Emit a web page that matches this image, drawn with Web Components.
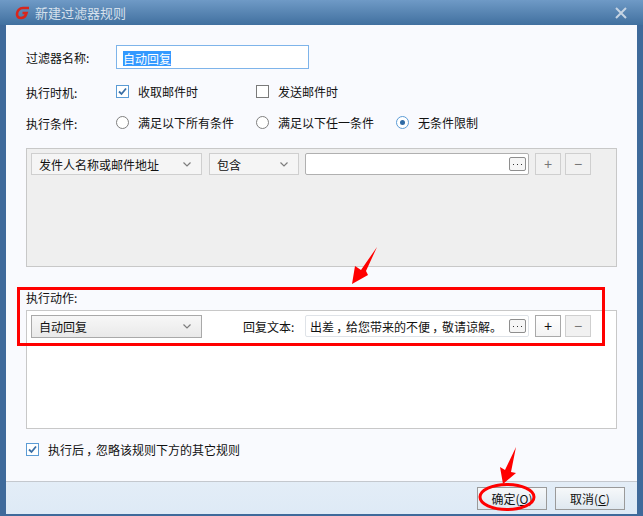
<!DOCTYPE html>
<html lang="zh-CN">
<head>
<meta charset="UTF-8">
<title>新建过滤器规则</title>
<style>
  html, body { margin: 0; padding: 0; background: #3f6a9b; }
  body { font: 12px "Noto Sans CJK SC", "Liberation Sans", sans-serif; color: #111; }
  /* the reference's comma sits in the middle of its cell */
  .cm { display: inline-block; width: 12px; text-align: center; font-feature-settings: "palt"; }
</style>
</head>
<body>

<filter-dialog>
  <span slot="title">新建过滤器规则</span>

  <form-row label="过滤器名称:" style="height:24px;margin-top:20px">
    <name-input value="自动回复"></name-input>
  </form-row>
  <form-row label="执行时机:" low style="height:14px;margin-top:15px">
    <check-option checked style="width:140px">收取邮件时</check-option>
    <check-option>发送邮件时</check-option>
  </form-row>
  <form-row label="执行条件:" low style="height:14px;margin-top:17px">
    <radio-option style="width:140px">满足以下所有条件</radio-option>
    <radio-option style="width:140px">满足以下任一条件</radio-option>
    <radio-option checked>无条件限制</radio-option>
  </form-row>

  <rule-panel style="margin-top:19px;background:#efefef">
    <drop-select style="width:171px">发件人名称或邮件地址</drop-select>
    <drop-select style="width:90px;margin-left:7px">包含</drop-select>
    <text-more style="margin-left:6px"></text-more>
    <square-btn style="margin-left:6px" disabled>+</square-btn>
    <square-btn style="margin-left:4px" disabled>−</square-btn>
  </rule-panel>

  <div style="margin:24px 0 5px 20px;height:14px;line-height:14px">执行动作:</div>

  <rule-panel style="background:#fff">
    <drop-select raised style="width:171px">自动回复</drop-select>
    <span style="width:62px;margin-left:41px;white-space:nowrap">回复文本:</span>
    <text-more light>出差<span class="cm">，</span>给您带来的不便<span class="cm">，</span>敬请谅解。</text-more>
    <square-btn active style="margin-left:6px">+</square-btn>
    <square-btn style="margin-left:4px" disabled>−</square-btn>
  </rule-panel>

  <check-option checked style="margin:13px 0 0 20px;width:400px">执行后<span class="cm">，</span>忽略该规则下方的其它规则</check-option>

  <push-btn slot="footer">确定(<u>O</u>)</push-btn>
  <push-btn slot="footer">取消(<u>C</u>)</push-btn>
</filter-dialog>

<mark-up></mark-up>

<script>
class FilterDialog extends HTMLElement {
  constructor() {
    super();
    this.attachShadow({mode: 'open'}).innerHTML = `
    <style>
      :host { display: flex; flex-direction: column; width: 643px; height: 516px; box-sizing: border-box;
              padding: 0 6px 2px 6px; background: #3f6a9b; overflow: hidden; }
      .bar { display: flex; align-items: center; height: 25px; margin: 0 -6px; padding: 0 6px 0 15px; flex: none;
             background: linear-gradient(#6f9ac6, #41709f); color: #d5e0ec; font-size: 13px; }
      .bar svg.logo { width: 16px; height: 14px; margin-right: 4px; }
      .bar .grow { flex: 1; }
      .bar svg.close { width: 12px; height: 12px; margin-right: 10px; }
      .body { flex: 1; background: #f9fafe; padding: 0 20px 0 0; display: flex; flex-direction: column; }
      .foot { flex: none; height: 32px; border-top: 1px solid #c4c8ce; background: linear-gradient(#e3edf7, #deeaf6);
              display: flex; justify-content: flex-end; align-items: center; gap: 8px; padding: 0 12px 0 0; }
    </style>
    <div class="bar">
      <svg class="logo" viewBox="0 0 16 14"><path fill="none" stroke="#d8261c" stroke-width="2.600" d="M14 2H8C4.500 2 2 5 2 8c0 2.500 1.500 4 4 4 2.500 0 4-1 5-3.500l.5-1.500H7.500"/></svg>
      <slot name="title"></slot>
      <span class="grow"></span>
      <svg class="close" viewBox="0 0 12 12"><path d="M1 1l10 10M11 1L1 11" stroke="#c6d4e3" stroke-width="2" fill="none"/></svg>
    </div>
    <div class="body"><slot></slot></div>
    <div class="foot"><slot name="footer"></slot></div>`;
  }
}

class FormRow extends HTMLElement {
  constructor() {
    super();
    this.attachShadow({mode: 'open'}).innerHTML = `
    <style>
      :host { display: flex; align-items: center; padding-left: 20px; }
      :host([low]) .label { padding-top: 3px; }
      .label { width: 90px; flex: none; white-space: nowrap; }
    </style>
    <span class="label"></span><slot></slot>`;
  }
  connectedCallback() {
    this.shadowRoot.querySelector('.label').textContent = this.getAttribute('label');
  }
}

class NameInput extends HTMLElement {
  constructor() {
    super();
    this.attachShadow({mode: 'open'}).innerHTML = `
    <style>
      :host { display: block; width: 193px; height: 24px; box-sizing: border-box; border: 1px solid #7eb4ea; background: #fff; padding: 4px 6px; }
      span { display: inline-block; height: 15px; line-height: 15px; background: #3399ff; color: #fff; }
    </style>
    <span></span>`;
  }
  connectedCallback() {
    this.shadowRoot.querySelector('span').textContent = this.getAttribute('value');
  }
}

class CheckOption extends HTMLElement {
  constructor() {
    super();
    this.attachShadow({mode: 'open'}).innerHTML = `
    <style>
      :host { display: flex; align-items: center; height: 14px; white-space: nowrap; }
      svg { width: 13px; height: 13px; flex: none; margin-right: 9px; }
    </style>
    <svg viewBox="0 0 13 13"></svg><span><slot></slot></span>`;
  }
  connectedCallback() {
    const on = this.hasAttribute('checked');
    this.shadowRoot.querySelector('svg').innerHTML = on
      ? '<rect x=".5" y=".5" width="12" height="12" fill="#fff" stroke="#5b9bd5"/><path d="M3 6.500l2.500 2.500L10 3.500" fill="none" stroke="#3a6ea5" stroke-width="1.800"/>'
      : '<rect x=".5" y=".5" width="12" height="12" fill="#fff" stroke="#7a7a7a"/>';
  }
}

class RadioOption extends HTMLElement {
  constructor() {
    super();
    this.attachShadow({mode: 'open'}).innerHTML = `
    <style>
      :host { display: flex; align-items: center; height: 14px; white-space: nowrap; }
      svg { width: 13px; height: 13px; flex: none; margin-right: 9px; }
    </style>
    <svg viewBox="0 0 13 13"></svg><slot></slot>`;
  }
  connectedCallback() {
    const on = this.hasAttribute('checked');
    this.shadowRoot.querySelector('svg').innerHTML =
      `<circle cx="6.500" cy="6.500" r="6" fill="#fff" stroke="${on ? '#5b9bd5' : '#7f7f7f'}"/>` +
      (on ? '<circle cx="6.500" cy="6.500" r="2.500" fill="#2f6aa5"/>' : '');
  }
}

class RulePanel extends HTMLElement {
  constructor() {
    super();
    this.attachShadow({mode: 'open'}).innerHTML = `
    <style>
      :host { display: flex; align-items: flex-start; height: 119px; box-sizing: border-box; margin-left: 20px;
              border: 1px solid #c8c8c8; padding: 4px; }
      ::slotted(span) { line-height: 23px; }
    </style>
    <slot></slot>`;
  }
}

class DropSelect extends HTMLElement {
  constructor() {
    super();
    this.attachShadow({mode: 'open'}).innerHTML = `
    <style>
      :host { display: flex; align-items: center; height: 22px; box-sizing: border-box; flex: none;
              border: 1px solid #cfcfcf; background: #f5f5f5; padding: 0 10px 0 7px; white-space: nowrap; }
      :host([raised]) { height: 23px; border-color: #a9a9a9; background: linear-gradient(#f7f7f7, #e9e9e9); }
      .t { flex: 1; }
      svg { width: 8px; height: 5px; }
    </style>
    <span class="t"><slot></slot></span>
    <svg viewBox="0 0 8 5"><path d="M.5.500L4 4 7.500.500" fill="none" stroke="#7d7d7d" stroke-width="1.200"/></svg>`;
  }
}

class TextMore extends HTMLElement {
  constructor() {
    super();
    this.attachShadow({mode: 'open'}).innerHTML = `
    <style>
      :host { display: flex; align-items: center; width: 224px; height: 22px; box-sizing: border-box; flex: none;
              border: 1px solid #b0b0b0; border-radius: 2px; background: #fff; padding: 0 2px 0 4px; }
      :host([light]) { border-color: #dfe3e8; }
      .t { flex: 1; white-space: nowrap; }
      .more { width: 17px; height: 14px; box-sizing: border-box; border: 1px solid #8e8e8e; border-radius: 2px; background: #f6f6f6;
              flex: none; display: flex; align-items: center; justify-content: center; }
      svg { width: 11px; height: 3px; }
    </style>
    <div class="t"><slot></slot></div>
    <div class="more"><svg viewBox="0 0 11 3"><path d="M1 1h1v1H1zM5 1h1v1H5zM9 1h1v1H9z" fill="#333"/></svg></div>`;
  }
}

class SquareBtn extends HTMLElement {
  constructor() {
    super();
    this.attachShadow({mode: 'open'}).innerHTML = `
    <style>
      :host { display: flex; align-items: center; justify-content: center; width: 26px; height: 22px; box-sizing: border-box; flex: none;
              border: 1px solid #cfcfcf; background: #f1f1f1; color: #777; font: 14px "Liberation Sans", sans-serif; }
      :host([active]) { border-color: #a9a9a9; background: linear-gradient(#fff, #f3f3f3); color: #111; }
    </style>
    <slot></slot>`;
  }
}

class PushBtn extends HTMLElement {
  constructor() {
    super();
    this.attachShadow({mode: 'open'}).innerHTML = `
    <style>
      :host { display: flex; align-items: center; justify-content: center; width: 70px; height: 23px; box-sizing: border-box;
              border: 1px solid #9a9a9a; background: linear-gradient(#f6f8fa, #dfe8f0); white-space: nowrap; }
    </style>
    <span><slot></slot></span>`;
  }
}

// red annotations drawn on top of the screenshot
class MarkUp extends HTMLElement {
  constructor() {
    super();
    this.attachShadow({mode: 'open'}).innerHTML = `
    <style>
      :host { position: absolute; left: 0; top: 0; width: 643px; height: 516px; pointer-events: none; }
      svg { display: block; }
    </style>
    <svg width="643" height="516" viewBox="0 0 643 516">
      <rect x="18.500" y="288.500" width="585" height="56" fill="none" stroke="#f00" stroke-width="3"/>
      <path fill="#f00" d="M377 247L366 271 368 275 352 284 355 266 361 270z"/>
      <path fill="#f00" d="M516 447L511 472 516 473 503 484 500 467 505 470z"/>
      <ellipse cx="507" cy="497" rx="27" ry="12.500" fill="none" stroke="#f00" stroke-width="3"/>
    </svg>`;
  }
}

customElements.define('filter-dialog', FilterDialog);
customElements.define('form-row', FormRow);
customElements.define('name-input', NameInput);
customElements.define('check-option', CheckOption);
customElements.define('radio-option', RadioOption);
customElements.define('rule-panel', RulePanel);
customElements.define('drop-select', DropSelect);
customElements.define('text-more', TextMore);
customElements.define('square-btn', SquareBtn);
customElements.define('push-btn', PushBtn);
customElements.define('mark-up', MarkUp);
</script>
</body>
</html>
